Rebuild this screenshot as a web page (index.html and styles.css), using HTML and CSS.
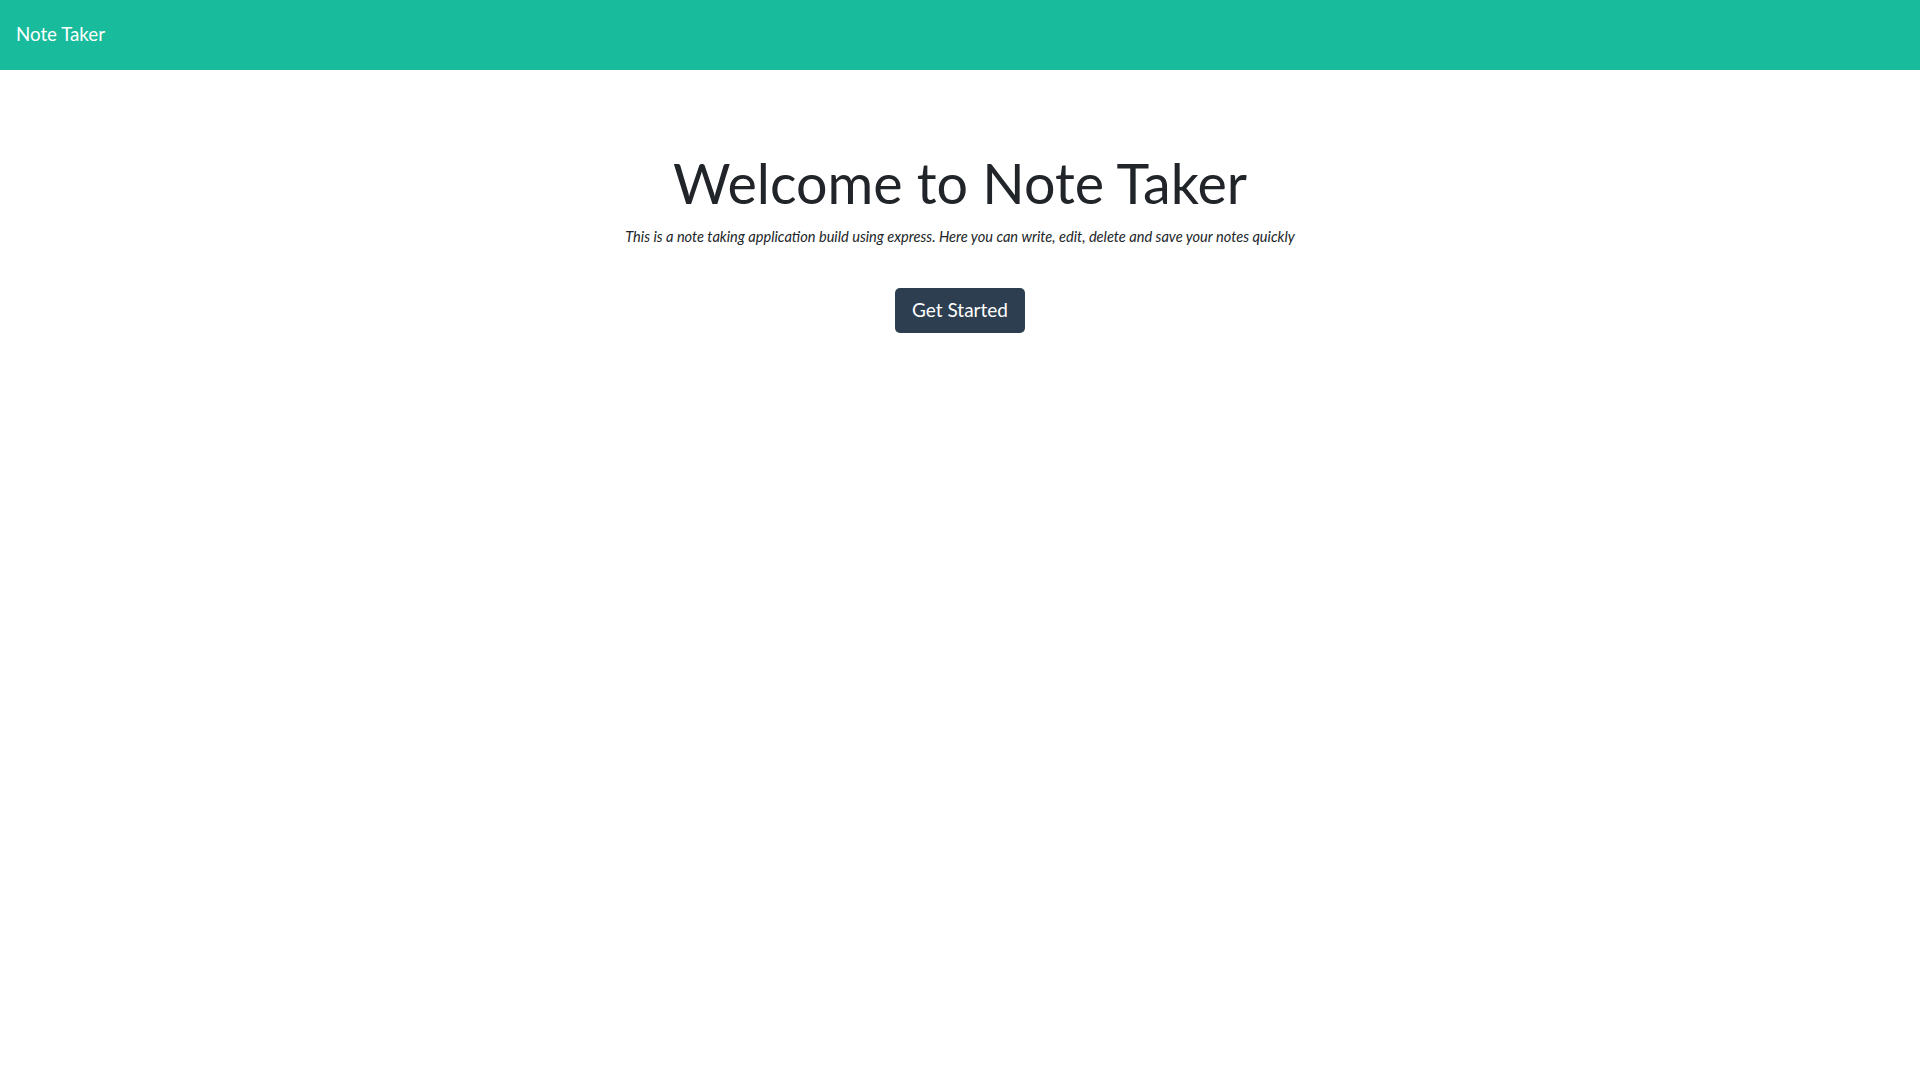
FILE: index.html
```html
<!DOCTYPE html>
<html lang="en">
<head>
<meta charset="utf-8">
<title>Note Taker</title>
<link rel="stylesheet" href="styles.css">
</head>
<body>
<nav class="navbar">
  <a class="brand" href="#">Note Taker</a>
</nav>
<main class="hero">
  <h1 class="title">Welcome to Note Taker</h1>
  <p class="lead"><em>This is a note taking application build using express. Here you can write, edit, delete and save your notes quickly</em></p>
  <a class="btn" href="#">Get Started</a>
</main>
</body>
</html>
```

FILE: styles.css
```css
* { box-sizing: border-box; }
html, body { margin: 0; padding: 0; }
body {
  font-family: Lato, "Open Sans", sans-serif;
  color: #212529;
  background: #fff;
}
.navbar {
  background: #18bc9c;
  height: 70px;
  padding: 0 16px;
  display: flex;
  align-items: center;
}
.brand {
  color: #fff;
  text-decoration: none;
  font-size: 18.7px;
  line-height: 1.5;
  margin-top: -2px;
}
.hero {
  display: flex;
  flex-direction: column;
  align-items: center;
  padding-top: 80px;
}
.title {
  font-size: 55.6px;
  font-weight: 400;
  margin: 0;
  line-height: 1.2;
}
.lead {
  font-size: 14.6px;
  margin: 11px 0 0;
}
.btn {
  margin-top: 43px;
  background: #2c3e50;
  color: #fff;
  text-decoration: none;
  font-size: 19px;
  line-height: 1.5;
  padding: 8.5px 17px;
  border-radius: 5px;
}
```
